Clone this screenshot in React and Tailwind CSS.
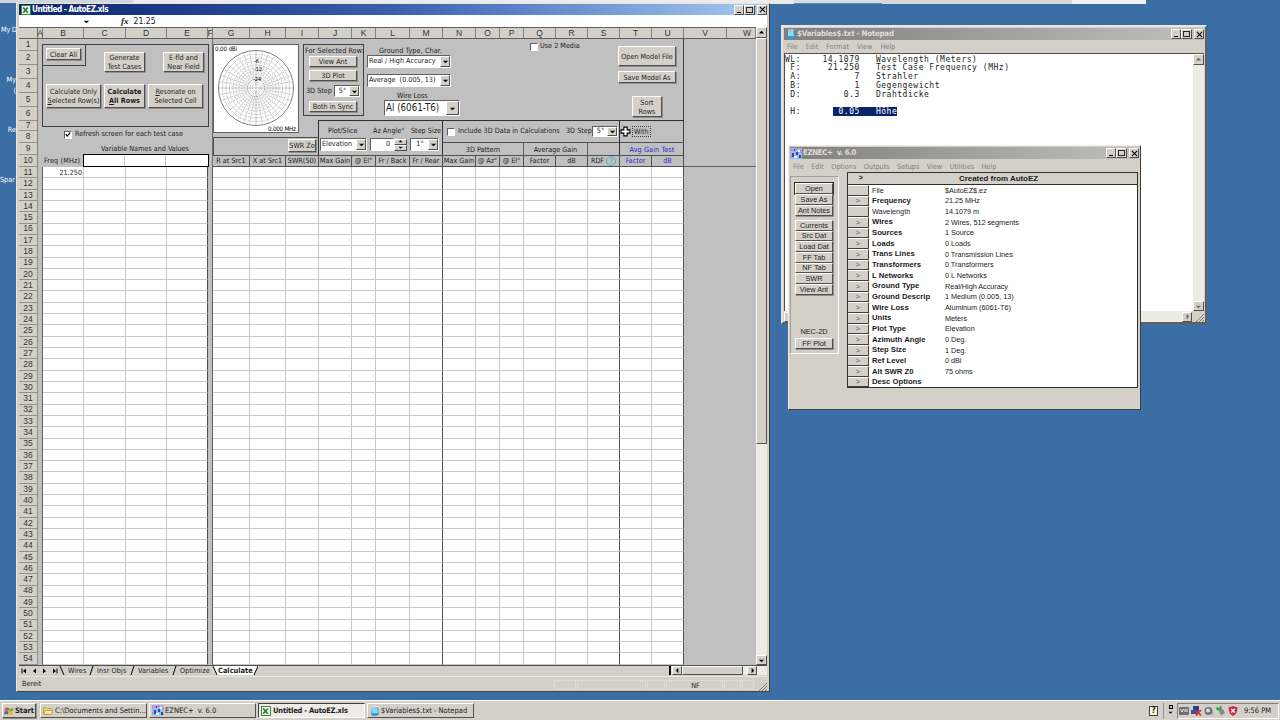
import React from 'react';

const bevel = 'border border-t-white border-l-white border-r-[#505050] border-b-[#505050] bg-[#d4d0c8]';
const sunken = 'border border-t-[#606060] border-l-[#606060] border-r-white border-b-white bg-white';

// column letter and its width on the sheet
const columns = [
  ['A', 'w-[5px]'], ['B', 'w-[41px]'], ['C', 'w-[42px]'], ['D', 'w-[41px]'], ['E', 'w-[41px]'], ['F', 'w-[5px]'],
  ['G', 'w-[37px]'], ['H', 'w-[36px]'], ['I', 'w-[33px]'], ['J', 'w-[33px]'], ['K', 'w-[24px]'], ['L', 'w-[34px]'],
  ['M', 'w-[33px]'], ['N', 'w-[33px]'], ['O', 'w-[24px]'], ['P', 'w-[24px]'], ['Q', 'w-[32px]'], ['R', 'w-[32px]'],
  ['S', 'w-[32px]'], ['T', 'w-[32px]'], ['U', 'w-[32px]'], ['V', 'w-[43px]'], ['W', 'w-[29px] pl-3'],
];

const topRows = [
  'h-[12px]', 'h-[14px]', 'h-[14px]', 'h-[14px]', 'h-[14px]', 'h-[14px]', 'h-[10px]', 'h-[12px]', 'h-[12px]', 'h-[12px]',
];

const dataRows = Array.from({ length: 44 }, (_, i) => i + 11);

const headings = [
  ['R at Src1', 'w-[37px]'], ['X at Src1', 'w-[36px]'], ['SWR(50)', 'w-[33px]'], ['Max Gain', 'w-[33px]'], ['@ El°', 'w-[24px]'],
  ['Fr / Back', 'w-[34px]'], ['Fr / Rear', 'w-[33px]'], ['Max Gain', 'w-[33px]'], ['@ Az°', 'w-[24px]'], ['@ El°', 'w-[24px]'],
  ['Factor', 'w-[32px]'], ['dB', 'w-[32px]'], ['RDF', 'w-[32px]'], ['Factor', 'w-[32px] text-[#2a2ad0]'], ['dB', 'w-[32px] text-[#2a2ad0]'],
];

const eznecRows = [
  ['File', '$AutoEZ$.ez', true], ['Frequency', '21.25 MHz'], ['Wavelength', '14.1079 m', true], ['Wires', '2 Wires, 512 segments'],
  ['Sources', '1 Source'], ['Loads', '0 Loads'], ['Trans Lines', '0 Transmission Lines'], ['Transformers', '0 Transformers'],
  ['L Networks', '0 L Networks'], ['Ground Type', 'Real/High Accuracy'], ['Ground Descrip', '1 Medium (0.005, 13)'],
  ['Wire Loss', 'Aluminum (6061-T6)'], ['Units', 'Meters'], ['Plot Type', 'Elevation'], ['Azimuth Angle', '0 Deg.'],
  ['Step Size', '1 Deg.'], ['Ref Level', '0 dBi'], ['Alt SWR Z0', '75 ohms'], ['Desc Options', ''],
];

const Btn = ({ className = '', children }) => (
  <button className={`${bevel} flex shrink-0 items-center justify-center whitespace-nowrap text-center leading-[9px] shadow-[1px_1px_0_#909090] ${className}`}>
    {children}
  </button>
);

const Arrow = ({ dir = 'down', className = '' }) => {
  const points = {
    down: '1,3 7,3 4,6',
    up: '1,5 7,5 4,2',
    left: '5,1 5,7 2,4',
    right: '3,1 3,7 6,4',
  };
  return (
    <svg viewBox="0 0 8 8" className={`h-[7px] w-[7px] shrink-0 fill-black ${className}`}>
      <polygon points={points[dir]} />
    </svg>
  );
};

const Combo = ({ className = '', arrow = 'w-[10px]', children }) => (
  <div className={`${sunken} flex shrink-0 items-stretch whitespace-nowrap ${className}`}>
    <span className="flex flex-1 items-center overflow-hidden pl-px">{children}</span>
    <span className={`${bevel} flex shrink-0 items-center justify-center ${arrow}`}><Arrow /></span>
  </div>
);

const Check = ({ checked }) => (
  <span className={`${sunken} flex h-[8px] w-[8px] shrink-0 items-center justify-center`}>
    {checked && (
      <svg viewBox="0 0 8 8" className="h-[7px] w-[7px] fill-none stroke-black stroke-[1.6]"><path d="M1 3.5 3 6 7 1.5" /></svg>
    )}
  </span>
);

const WindowButtons = () => (
  <div className="ml-auto flex items-center">
    <span className={`${bevel} flex h-[10px] w-[10px] items-end justify-center`}><i className="mb-px h-px w-[4px] bg-black" /></span>
    <span className={`${bevel} flex h-[10px] w-[11px] items-center justify-center`}><i className="h-[6px] w-[7px] border border-t-[1.5px] border-black/80" /></span>
    <span className={`${bevel} ml-[2px] flex h-[10px] w-[10px] items-center justify-center`}>
      <svg viewBox="0 0 8 8" className="h-[7px] w-[7px] stroke-black stroke-[1.3]"><path d="M1 1 7 7M7 1 1 7" /></svg>
    </span>
  </div>
);

const ExcelIcon = () => (
  <svg viewBox="0 0 10 10" className="h-[10px] w-[10px] shrink-0">
    <rect width="10" height="10" fill="#3c8a44" />
    <rect x="1" y="1" width="8" height="8" fill="#eaf5ea" />
    <path d="M2.2 2.5 6.8 7.8M6.8 2.5 2.2 7.8" stroke="#2a7a36" strokeWidth="1.7" />
  </svg>
);

const NotepadIcon = () => (
  <svg viewBox="0 0 10 10" className="h-[10px] w-[10px] shrink-0">
    <path d="M2 1H8L9 8 7 10H2L1 8Z" fill="#3a9bd0" />
    <path d="M2 2H7L8 7H2Z" fill="#8fd8f4" />
    <path d="M2 1H8" stroke="#e8f4fa" />
  </svg>
);

const EznecIcon = () => (
  <svg viewBox="0 0 12 11" className="h-[11px] w-[12px] shrink-0">
    <rect width="12" height="11" fill="#8cc4e8" />
    <path d="M0 1H3V3H0ZM5 0H8V2H5ZM10 2H12V5H10ZM0 7H2V9H0Z" fill="#e07cd8" />
    <path d="M2 5H4V9H2ZM6 4H8V7H6ZM9 7H11V10H9ZM4 1H5V3H4Z" fill="#4040a8" />
    <path d="M4 8H7V10H4ZM8 2H10V4H8Z" fill="#e4f2ff" />
  </svg>
);

const PolarPlot = () => {
  const rings = [37.5, 33.5, 30, 26.5, 23, 20, 17, 14, 11, 8.5, 6, 4];
  const spokes = Array.from({ length: 36 }, (_, i) => (i * Math.PI) / 18);
  return (
    <div className="h-[89px] w-[86px] shrink-0 border border-[#606060] bg-white">
      <svg viewBox="0 0 84 87" className="h-[87px] w-[84px] fill-none stroke-[#8c8c8c] stroke-[0.5]">
        {rings.map((r, i) => (
          <circle key={r} cx="42" cy="43" r={r} className={i === 0 ? 'stroke-[#606060] stroke-[0.8]' : ''} strokeDasharray={i ? '2 0.8' : undefined} />
        ))}
        {spokes.map((a, i) => (
          <line
            key={a}
            x1={42 + (i % 9 ? 8 : 0) * Math.cos(a)} y1={43 + (i % 9 ? 8 : 0) * Math.sin(a)}
            x2={42 + 37.5 * Math.cos(a)} y2={43 + 37.5 * Math.sin(a)}
            strokeDasharray={i % 9 ? '2 1.2' : undefined}
          />
        ))}
        <g className="fill-black stroke-none font-['DejaVu_Sans_Condensed',sans-serif] text-[5.5px]">
          <text x="1" y="6" textLength="22" className="text-[6.2px]">0.00 dBi</text>
          <text x="54" y="86" textLength="28" className="text-[6.2px]">0.000 MHz</text>
          <text x="40" y="18">-6</text>
          <text x="40" y="26">-12</text>
          <text x="39" y="36">-24</text>
        </g>
      </svg>
    </div>
  );
};

const Sheet = () => (
  <div className="flex h-[638px] w-[737px] flex-col overflow-hidden bg-[#c0c0c0]">
    <div className="flex h-[12px] shrink-0 border-b border-t border-[#606060] bg-[#d4d0c8] font-['Liberation_Sans',sans-serif] text-[8.5px] leading-[10px] text-[#333]">
      <span className="w-[19px] shrink-0 border-r border-[#707070]" />
      {columns.map(([name, width]) => (
        <span key={name} className={`${width} flex shrink-0 justify-center border-r border-[#808080]`}>{name}</span>
      ))}
    </div>
    <div className="flex h-[128px] shrink-0">
      <div className="w-[19px] shrink-0 border-r border-[#808080] bg-[#d4d0c8] font-['Liberation_Sans',sans-serif] text-[8.5px] text-[#333]">
        {topRows.map((height, i) => (
          <div key={i} className={`${height} flex items-center justify-center overflow-hidden border-b border-[#909090] leading-none`}>{i + 1}</div>
        ))}
      </div>
      <VariablesPane />
      <ResultsPane />
      <div className="flex-1 border-b border-[#606060]" />
    </div>
    {dataRows.map((row) => (
      <div key={row} className="flex h-[11.3px] shrink-0 grow">
        <span className="flex w-[19px] shrink-0 items-center justify-center border-b border-r border-[#909090] bg-[#d4d0c8] font-['Liberation_Sans',sans-serif] text-[8.5px] leading-none text-[#333]">{row}</span>
        {columns.map(([name, width]) => {
          let look = 'border-b border-r border-[#c8c8c8] bg-white';
          if (name === 'E' || name === 'M' || name === 'S' || name === 'U') look = 'border-b border-r border-b-[#c8c8c8] border-r-[#505050] bg-white';
          if (name === 'A' || name === 'F') look = 'border-r border-[#606060] bg-[#c0c0c0]';
          if (name === 'V' || name === 'W') look = 'bg-[#c0c0c0]';
          return (
            <span key={name} className={`${width} ${look} flex shrink-0 items-center justify-end pr-px leading-none`}>
              {row === 11 && name === 'B' ? '21.250' : ''}
            </span>
          );
        })}
      </div>
    ))}
  </div>
);

const VariablesPane = () => (
  <div className="flex w-[175px] shrink-0 flex-col border-r border-[#707070] pl-1">
    <div className="mt-[5px] h-[83px] w-[167px] shrink-0 border border-[#404040]">
      <div className="flex">
        <div className="h-[21px] w-[43px] border-b border-r border-[#404040] pl-[3px] pt-[3px]">
          <Btn className="h-[12px] w-[35px]">Clear All</Btn>
        </div>
        <Btn className="ml-[18px] mt-[7px] h-[20px] w-[41px]">Generate<br />Test Cases</Btn>
        <Btn className="ml-[18px] mt-[7px] h-[20px] w-[41px]">E-fld and<br />Near Field</Btn>
      </div>
      <div className="mt-[12px] flex gap-[3px] pl-[3px]">
        <Btn className="h-[24px] w-[55px]"><span>Calculate Only<br /><u>S</u>elected Row(s)</span></Btn>
        <Btn className="h-[24px] w-[41px] font-bold"><span>Calculate<br /><u>A</u>ll Rows</span></Btn>
        <Btn className="h-[24px] w-[55px]"><span><u>R</u>esonate on<br />Selected Cell</span></Btn>
      </div>
    </div>
    <label className="flex h-[15px] shrink-0 items-center gap-[3px] pl-[22px]"><Check checked />Refresh screen for each test case</label>
    <div className="h-[12px] shrink-0 pl-[59px] leading-[13px]">Variable Names and Values</div>
    <div className="flex h-[13px] shrink-0">
      <span className="w-[41px] whitespace-nowrap pl-[2px] leading-[14px] tracking-[0.15px]">Freq (MHz)</span>
      <div className="flex h-[13px] w-[126px] border border-black bg-white">
        <span className="w-[41px] border-r border-[#c8c8c8]" />
        <span className="w-[41px] border-r border-[#c8c8c8]" />
      </div>
    </div>
  </div>
);

const ResultsPane = () => (
  <div className="flex w-[471px] shrink-0 flex-col border-r border-[#404040]">
    <div className="flex h-[116px] shrink-0">
      <div className="flex w-[105px] shrink-0 flex-col pt-[5px]">
        <PolarPlot />
        <div className="mt-[4px] flex-1 border-l border-t border-[#505050]">
          <Btn className="ml-[74px] mt-px h-[13px] w-[28px]">SWR Zo</Btn>
        </div>
      </div>
      <div className="flex w-[366px] shrink-0 flex-col">
        <div className="-ml-[15px] flex h-[81px] shrink-0">
          <div className="mt-[5px] h-[72px] w-[61px] shrink-0 border border-[#404040]">
            <div className="h-[11px] whitespace-nowrap pl-px leading-[12px] tracking-[0.1px]">For Selected Row:</div>
            <Btn className="ml-[5px] h-[11px] w-[48px]">View Ant</Btn>
            <Btn className="ml-[5px] mt-[3px] h-[11px] w-[48px]">3D Plot</Btn>
            <div className="mt-[4px] flex items-center whitespace-nowrap pl-[2px]">
              <span className="w-[28px]">3D Step</span>
              <Combo className="h-[12px] w-[26px]"><span className="w-full text-center">5°</span></Combo>
            </div>
            <Btn className="ml-[5px] mt-[4px] h-[11px] w-[48px]">Both in Sync</Btn>
          </div>
          <div className="ml-[3px] mt-[7px] w-[98px] shrink-0 whitespace-nowrap">
            <div className="h-[8px] pl-[12px] leading-[9px] tracking-[0.1px]">Ground Type, Char.</div>
            <Combo className="mt-px h-[13px] w-[84px]">Real / High Accuracy</Combo>
            <Combo className="mt-[6px] h-[13px] w-[84px]">Average&nbsp; (0.005, 13)</Combo>
            <div className="mt-[4px] h-[9px] pl-[30px] leading-[9px]">Wire Loss</div>
            <Combo className="ml-[17px] h-[16px] w-[76px] text-[9.7px]" arrow="w-[13px]">Al (6061-T6)</Combo>
          </div>
          <label className="ml-[65px] mt-[3px] flex h-[9px] w-[88px] shrink-0 items-center gap-[2px] whitespace-nowrap"><Check />Use 2 Media</label>
          <div className="flex flex-col items-center pt-[7px]">
            <Btn className="h-[20px] w-[58px]">Open Model File</Btn>
            <Btn className="mt-[5px] h-[12px] w-[58px]">Save Model As</Btn>
            <Btn className="mt-[13px] h-[21px] w-[30px]">Sort<br />Rows</Btn>
          </div>
        </div>
        <div className="flex h-[35px] shrink-0 border-l border-t border-[#303030]">
          <div className="w-[124px] shrink-0 whitespace-nowrap border-r border-[#303030]">
            <div className="flex h-[17px] items-center pt-[4px]">
              <span className="w-[54px] pl-[9px]">Plot/Slice</span>
              <span className="w-[38px]">Az Angle°</span>
              <span>Step Size</span>
            </div>
            <div className="flex items-center pl-px">
              <Combo className="h-[13px] w-[47px]">Elevation</Combo>
              <div className={`${sunken} ml-[3px] flex h-[13px] w-[24px] items-center justify-end pr-[3px]`}>0</div>
              <div className="flex w-[13px] flex-col">
                <span className={`${bevel} flex h-[6px] items-center justify-center`}><Arrow dir="up" className="scale-75" /></span>
                <span className={`${bevel} flex h-[6px] items-center justify-center`}><Arrow className="scale-75" /></span>
              </div>
              <Combo className="ml-[3px] h-[13px] w-[29px]"><span className="w-full text-center">1°</span></Combo>
            </div>
          </div>
          <div className="w-[177px] shrink-0 border-r border-[#303030]">
            <div className="flex h-[22px] items-center whitespace-nowrap border-b border-[#505050] pl-[4px]">
              <Check /><span className="ml-[3px] w-[108px]">Include 3D Data in Calculations</span>
              <span className="w-[26px]">3D Step</span>
              <Combo className="h-[11px] w-[26px]"><span className="w-full text-center">5°</span></Combo>
            </div>
            <div className="flex h-[13px] text-center leading-[13px]">
              <span className="w-[81px] border-r border-[#606060]">3D Pattern</span>
              <span className="w-[64px] border-r border-[#606060]">Average Gain</span>
            </div>
          </div>
          <div className="flex-1">
            <div className="flex h-[22px] items-center border-b border-[#505050]">
              <svg viewBox="0 0 10 10" className="h-[11px] w-[11px] fill-white stroke-black"><path d="M3.5 1H6.5V3.5H9V6.5H6.5V9H3.5V6.5H1V3.5H3.5Z" /></svg>
              <span className="ml-px border border-dotted border-[#404040] px-px leading-[9px]">With</span>
            </div>
            <div className="h-[13px] text-center leading-[13px] tracking-[0.1px] text-[#2a2ad0]">Avg Gain Test</div>
          </div>
        </div>
      </div>
    </div>
    <div className="flex h-[12px] shrink-0 border-b border-t border-[#505050]">
      {headings.map(([text, width], i) => (
        <span key={i} className={`${width} flex shrink-0 items-center justify-center gap-[2px] whitespace-nowrap border-r border-[#505050] leading-none`}>
          {text}
          {text === 'RDF' && (
            <i className="flex h-[10px] w-[10px] items-center justify-center rounded-full border border-[#42b8d0] text-[7px] not-italic text-[#2aa0c0]">?</i>
          )}
        </span>
      ))}
    </div>
  </div>
);

const tabs = [['Wires', 'w-[29px]'], ['Insr Objs', 'w-[41px]'], ['Variables', 'w-[42px]'], ['Optimize', 'w-[38px]']];

const ExcelWindow = () => (
  <div className="absolute left-[16px] top-[3px] flex h-[689px] w-[754px] flex-col border border-[#e8e6e0] border-b-[#404040] border-r-[#404040] bg-[#d4d0c8] pl-[2px] pr-[2px]">
    <div className="flex h-[11px] shrink-0 items-center bg-linear-to-r from-[#0a246a] via-[#3a5fae] to-[#a6caf0] pl-[2px] text-white">
      <ExcelIcon />
      <span className="ml-px text-[8.2px] font-bold leading-none tracking-[-0.48px]">Untitled - AutoEZ.xls</span>
      <WindowButtons />
    </div>
    <div className="flex h-[12px] shrink-0 items-center bg-white">
      <Arrow className="ml-[64px]" />
      <span className="ml-[31px] font-['Liberation_Serif',serif] text-[9px] font-bold italic leading-none">fx</span>
      <span className="ml-[5px] text-[8.6px] leading-none">21.25</span>
    </div>
    <div className="flex shrink-0">
      <Sheet />
      <div className="flex w-[11px] flex-col bg-[#ecebe6]">
        <span className={`${bevel} flex h-[11px] items-center justify-center`}><Arrow dir="up" /></span>
        <span className={`${bevel} h-[406px]`} />
        <span className={`${bevel} mt-auto flex h-[10px] items-center justify-center`}><Arrow /></span>
      </div>
    </div>
    <div className="flex h-[10px] shrink-0 items-center border-t border-[#505050] leading-none">
      <svg viewBox="0 0 40 8" className="h-[8px] w-[40px] shrink-0">
        <path d="M3 1.5V6.5M38 1.5V6.5" stroke="black" />
        <path d="M7 1.5V6.5L4 4ZM17 1.5V6.5L14 4ZM24 1.5V6.5L27 4ZM34 1.5V6.5L37 4Z" />
      </svg>
      <svg viewBox="0 0 6 9" className="h-[9px] w-[6px] stroke-black"><path d="M1 0 5 9" /></svg>
      {tabs.map(([name, width], i) => (
        <React.Fragment key={name}>
          <span className={`${width} shrink-0 whitespace-nowrap pl-[3px] tracking-[0.1px]`}>{name}</span>
          {i < 3 && <svg viewBox="0 0 5 9" className="-ml-[5px] h-[9px] w-[5px] fill-none stroke-black"><path d="M1 9 4 0" /></svg>}
        </React.Fragment>
      ))}
      <div className="-ml-[2px] flex h-[9px] items-center">
        <svg viewBox="0 0 5 9" className="h-[9px] w-[5px] fill-white stroke-black"><path d="M0 0 4 9H5V0Z" stroke="none" /><path d="M0 0 4 9" /></svg>
        <b className="h-[9px] bg-white text-[7.4px] leading-[9px]">Calculate</b>
        <svg viewBox="0 0 5 9" className="h-[9px] w-[5px] fill-white stroke-black"><path d="M0 0H5L1 9H0Z" stroke="none" /><path d="M5 0 1 9" /></svg>
      </div>
      <div className="ml-auto flex h-[9px] w-[98px] shrink-0 bg-[#ecebe6]">
        <i className="mr-px w-[2px] bg-black" />
        <span className={`${bevel} flex w-[10px] items-center justify-center`}><Arrow dir="left" /></span>
        <span className={`${bevel} w-[61px]`} />
        <span className={`${bevel} ml-[4px] flex w-[10px] items-center justify-center`}><Arrow dir="right" /></span>
      </div>
    </div>
    <div className="mt-px flex h-[16px] items-center border-t border-[#e8e6e0] pl-[3px]">
      <span>Bereit</span>
      <div className="ml-auto flex h-[9px] gap-px pr-[4px] text-center leading-[9px] *:border *:border-[#dedbd4]">
        <i className="w-[22px]" /><i className="w-[69px]" /><i className="w-[18px]" />
        <span className="w-[57px] pl-[2px]">NF</span><i className="w-[17px]" /><i className="w-[12px]" />
      </div>
      <Grip className="mt-[4px]" />
    </div>
  </div>
);

const Grip = ({ className = '' }) => (
  <svg viewBox="0 0 9 9" className={`h-[9px] w-[9px] shrink-0 stroke-[#808080] ${className}`}><path d="M1 9 9 1M4 9 9 4M7 9 9 7" /></svg>
);

const notes = [
  'WL:    14.1079   Wavelength (Meters)',
  ' F:     21.250   Test Case Frequency (MHz)',
  ' A:          7   Strahler',
  ' B:          1   Gegengewicht',
  ' D:        0.3   Drahtdicke',
  '',
];

const NotepadWindow = () => (
  <div className="absolute left-[781px] top-[25px] flex h-[299px] w-[426px] flex-col border-2 border-[#e8e6e0] border-b-[#606060] border-r-[#606060] bg-[#d4d0c8] px-px pt-px">
    <div className="flex h-[12px] shrink-0 items-center bg-linear-to-r from-[#808080] to-[#c0c0c0] pl-[2px] text-[#e0ddd6]">
      <NotepadIcon />
      <span className="ml-px text-[7.8px] font-bold leading-none tracking-[-0.2px]">$Variables$.txt - Notepad</span>
      <WindowButtons />
    </div>
    <div className="flex h-[13px] shrink-0 items-center gap-[8px] pl-[3px] pt-px text-[#808080]">
      <span>File</span><span>Edit</span><span>Format</span><span>View</span><span>Help</span>
    </div>
    <div className="flex flex-1 border-l border-t border-[#505050] bg-white">
      <pre className="flex-1 pt-[1.5px] font-['DejaVu_Sans_Mono',monospace] text-[8px] leading-[8.75px] tracking-[0.53px]">
        {notes.join('\n')}{'\n'} H:      <span className="bg-[#0a246a] text-white"> 0.05   Höhe</span>
      </pre>
      <div className="flex w-[11px] flex-col justify-between bg-[#ecebe6]">
        <span className={`${bevel} flex h-[11px] items-center justify-center`}><Arrow dir="up" className="opacity-50" /></span>
        <span className={`${bevel} flex h-[10px] items-center justify-center`}><Arrow className="opacity-50" /></span>
      </div>
    </div>
    <div className="flex h-[11px] shrink-0 items-center bg-[#ecebe6]">
      <span className={`${bevel} flex h-[10px] w-[10px] items-center justify-center`}><Arrow dir="left" className="opacity-50" /></span>
      <span className={`${bevel} ml-auto flex h-[10px] w-[10px] items-center justify-center`}><Arrow dir="right" className="opacity-50" /></span>
      <span className="flex h-[11px] w-[12px] items-end justify-end bg-[#d4d0c8]"><Grip /></span>
    </div>
  </div>
);

const actions = ['Currents', 'Src Dat', 'Load Dat', 'FF Tab', 'NF Tab', 'SWR', 'View Ant'];

const EznecWindow = () => (
  <div className="absolute left-[788px] top-[145px] flex h-[265px] w-[353px] flex-col border border-[#f0eee8] border-b-[#404040] border-r-[#404040] bg-[#d4d0c8] p-px font-['Liberation_Sans',sans-serif] text-[7.3px]">
    <div className="flex h-[12px] shrink-0 items-center bg-linear-to-r from-[#808080] to-[#c0c0c0] text-[#e0ddd6]">
      <EznecIcon />
      <span className="ml-px font-['DejaVu_Sans_Condensed',sans-serif] text-[7.8px] font-bold leading-none tracking-[-0.35px]">EZNEC+&nbsp; v. 6.0</span>
      <WindowButtons />
    </div>
    <div className="flex h-[13px] shrink-0 items-center gap-[7.5px] pl-[3px] pt-[3px] font-['DejaVu_Sans_Condensed',sans-serif] text-[7.2px] text-[#808080]">
      <span>File</span><span>Edit</span><span>Options</span><span>Outputs</span><span>Setups</span><span>View</span><span>Utilities</span><span>Help</span>
    </div>
    <div className="flex">
      <div className="mt-[4px] flex h-[178px] w-[49px] shrink-0 flex-col items-center border border-[#a0a0a0] border-b-white border-r-white pr-px pt-[6px]">
        <Btn className="h-[11px] w-[38px] outline outline-[#303030]">Open</Btn>
        <Btn className="h-[11px] w-[38px]">Save As</Btn>
        <Btn className="h-[11px] w-[38px]">Ant Notes</Btn>
        <div className="mt-[4px]">
          {actions.map((name) => <Btn key={name} className="h-[10.67px] w-[38px]">{name}</Btn>)}
        </div>
        <span className="mt-[31px] leading-[11px]">NEC-2D</span>
        <Btn className="mt-px h-[11px] w-[38px]">FF Plot</Btn>
      </div>
      <div className="ml-[8px] w-[291px] border border-[#303030] bg-white">
        <div className="flex h-[12px] items-center border-b border-[#303030] bg-[#d4d0c8]">
          <span className="w-[26px] text-center font-bold">&gt;</span>
          <b className="flex-1 pr-[14px] text-center text-[7.9px]">Created from AutoEZ</b>
        </div>
        {eznecRows.map(([name, value, plain]) => (
          <div key={name} className="flex h-[10.66px] items-center whitespace-nowrap leading-none">
            <span className="flex h-full w-[21px] items-center justify-center border-b border-r border-t border-b-[#404040] border-r-[#404040] border-t-white bg-[#d4d0c8] text-[#505050]">{plain ? '' : '>'}</span>
            <span className={`w-[73px] pl-[3px] ${plain ? '' : 'text-[7.7px] font-bold'}`}>{name}</span>
            <span className="pl-[3px] tracking-[-0.04px]">{value}</span>
          </div>
        ))}
      </div>
    </div>
  </div>
);

const Taskbar = () => (
  <div className="absolute inset-x-0 bottom-0 flex h-[20px] items-center gap-[2px] border-t border-white bg-[#d4d0c8] pl-[2px] text-[7.5px]">
    <Btn className="mr-[2px] h-[15px] w-[34px] gap-px font-bold">
      <svg viewBox="0 0 10 10" className="h-[10px] w-[10px]">
        <path d="M1 2Q3 1 5 2L4.5 5Q2.5 4 .5 5Z" fill="#e0522c" /><path d="M5.5 2Q7.5 3 9.5 2L9 5Q7 6 5 5Z" fill="#6cb33e" />
        <path d="M.5 5.5Q2.5 4.5 4.5 5.5L4 8.5Q2 7.5 0 8.5Z" fill="#3a6ed0" /><path d="M5 5.5Q7 6.5 9 5.5L8.5 8.5Q6.5 9.5 4.5 8.5Z" fill="#f2b822" />
      </svg>
      Start
    </Btn>
    <div className={`${bevel} flex h-[15px] w-[107px] items-center gap-[3px] whitespace-nowrap pl-[2px]`}>
      <svg viewBox="0 0 11 9" className="h-[9px] w-[11px]"><path d="M.5 8.5V1.5H4L5 2.5H9.5V8.5Z" fill="#f5d870" stroke="#a8842c" strokeWidth=".7" /><path d="M.5 8.5 2.5 4.5H10.5L9.5 8.5Z" fill="#fdf0a8" stroke="#a8842c" strokeWidth=".7" /></svg>
      <span className="-ml-px">C:\Documents and Settin...</span>
    </div>
    <div className={`${bevel} flex h-[15px] w-[107px] items-center gap-px whitespace-nowrap pl-[2px]`}><EznecIcon />EZNEC+&nbsp; v. 6.0</div>
    <div className="flex h-[15px] w-[107px] items-center gap-[3px] whitespace-nowrap border border-b-white border-l-[#404040] border-r-white border-t-[#404040] bg-[#eeece8] pl-[2px] font-bold tracking-[-0.2px]"><ExcelIcon /><span className="-ml-px">Untitled - AutoEZ.xls</span></div>
    <div className={`${bevel} flex h-[15px] w-[107px] items-center gap-[3px] whitespace-nowrap pl-[2px]`}><NotepadIcon /><span className="-ml-[2px]">$Variables$.txt - Notepad</span></div>
    <div className="ml-auto flex items-center pr-px">
      <span className="mr-[5px] flex h-[10px] w-[9px] items-center justify-center border border-[#404040] bg-[#ffffe0] text-[8px] font-bold leading-none">?</span>
      <span className="flex h-[16px] w-[14px] flex-col items-center justify-center border-l border-[#909090]">
        <i className="h-[4px] w-[4px] border border-black" /><Arrow className="scale-75" />
      </span>
      <div className="flex h-[16px] w-[102px] items-center gap-[2px] border border-b-white border-l-[#808080] border-r-white border-t-[#808080] pl-px">
        <svg viewBox="0 0 10 10" className="h-[10px] w-[10px]"><rect y="1" width="10" height="8" rx="1" fill="#707070" /><path d="M1.5 3 3 6 4.5 3M6 3V6M8 3V6" stroke="#eee" fill="none" /></svg>
        <svg viewBox="0 0 11 10" className="h-[10px] w-[11px]"><rect x="2" width="6" height="5" fill="#283c90" /><rect y="4" width="6" height="4" fill="#3850a8" /><path d="M5 4 10 9.5M10 4 5 9.5" stroke="#e02828" strokeWidth="1.6" /></svg>
        <svg viewBox="0 0 10 10" className="h-[10px] w-[10px]"><circle cx="4.5" cy="5" r="4" fill="#707478" /><circle cx="4" cy="4.5" r="2" fill="#d8dce0" /><path d="M7.5 9 9.5 6V9Z" fill="#9aacd8" /></svg>
        <svg viewBox="0 0 10 10" className="h-[10px] w-[10px]"><path d="M3 5 7 3 9 7 5 9.5Z" fill="#888" /><path d="M1 1 3 3 5 0 5 4 1 4Z" fill="#28a838" stroke="#28a838" /></svg>
        <svg viewBox="0 0 10 10" className="h-[10px] w-[10px]"><path d="M5 0 9.5 1.5Q9.5 8 5 10 .5 8 .5 1.5Z" fill="#c83048" /><path d="M3.3 3 6.7 6.5M6.7 3 3.3 6.5" stroke="white" strokeWidth="1.2" /></svg>
        <span className="ml-[4px] whitespace-nowrap">9:56 PM</span>
      </div>
    </div>
  </div>
);

const App = () => {
  return (
    <div className="relative h-[720px] w-[1280px] overflow-hidden bg-[#3a6ea5] font-['DejaVu_Sans_Condensed','DejaVu_Sans',sans-serif] text-[7.2px] text-[#1c1c1c]">
      <div className="flex h-[4px] bg-[#3a6ea5]">
        <span className="h-[3px] w-[133px] bg-[#cfd6de]" />
        <span className="w-[661px] bg-[#ebebeb]" />
        <span className="w-[88px] border-b border-[#4a90d0] bg-[#dcdcdc]" />
        <span className="w-[190px] bg-[#d8d8d8]" />
        <span className="w-[74px] bg-[#f0f2f8]" />
      </div>
      <div className="absolute left-0 top-[25px] w-[16px] whitespace-nowrap text-right text-white">
        <div className="h-[50px] pl-px text-left tracking-[-0.2px]">My D</div>
        <div className="h-[50px]">My<br />(</div>
        <div className="h-[50px]">Re</div>
        <div className="text-left">Spar</div>
      </div>
      <ExcelWindow />
      <NotepadWindow />
      <EznecWindow />
      <Taskbar />
    </div>
  );
};

export default App;
